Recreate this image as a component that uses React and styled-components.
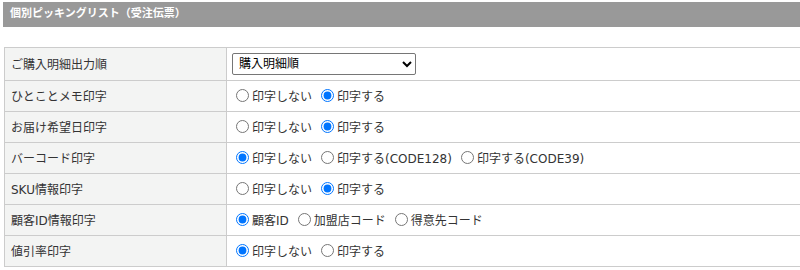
import React from 'react';
import styled, { createGlobalStyle } from 'styled-components';

const GlobalStyle = createGlobalStyle`
  html, body {
    margin: 0;
    padding: 0;
    background: #fff;
    overflow: hidden;
  }
  body {
    font-family: "DejaVu Sans", "Noto Sans CJK JP", sans-serif;
    font-size: 12px;
    color: #333;
  }
`;

const rows = [
  { label: 'ひとことメモ印字', name: 'memo', options: ['印字しない', '印字する'], checked: 1 },
  { label: 'お届け希望日印字', name: 'delivery', options: ['印字しない', '印字する'], checked: 1 },
  { label: 'バーコード印字', name: 'barcode', options: ['印字しない', '印字する(CODE128)', '印字する(CODE39)'], checked: 0 },
  { label: 'SKU情報印字', name: 'sku', options: ['印字しない', '印字する'], checked: 1 },
  { label: '顧客ID情報印字', name: 'customer', options: ['顧客ID', '加盟店コード', '得意先コード'], checked: 0 },
  { label: '値引率印字', name: 'discount', options: ['印字しない', '印字する'], checked: 0 },
];

const App = () => {
  return (
    <Page>
      <GlobalStyle />
      <SectionTitle>個別ピッキングリスト（受注伝票）</SectionTitle>
      <SettingTable>
        <colgroup>
          <LabelCol />
          <col />
        </colgroup>
        <tbody>
          <Row $first>
            <LabelCell>ご購入明細出力順</LabelCell>
            <ValueCell>
              <Select defaultValue="detail">
                <option value="detail">購入明細順</option>
              </Select>
            </ValueCell>
          </Row>
          {rows.map((row) => (
            <Row key={row.name}>
              <LabelCell>{row.label}</LabelCell>
              <ValueCell>
                {row.options.map((opt, i) => (
                  <RadioLabel key={opt}>
                    <Radio type="radio" name={row.name} defaultChecked={i === row.checked} />
                    {opt}
                  </RadioLabel>
                ))}
              </ValueCell>
            </Row>
          ))}
        </tbody>
      </SettingTable>
    </Page>
  );
};

export default App;

const Page = styled.div`
  padding: 2px 0 0 3px;
`;

const SectionTitle = styled.div`
  height: 25px;
  line-height: 24px;
  background: #999999;
  color: #fff;
  font-weight: bold;
  font-size: 11px;
  padding-left: 7px;
  margin-bottom: 20px;
`;

const SettingTable = styled.table`
  border-collapse: collapse;
  table-layout: fixed;
  margin-left: 1px;
  width: 830px;
`;

const LabelCol = styled.col`
  width: 222px;
`;

const Row = styled.tr`
  height: ${(p) => (p.$first ? '33px' : '31px')};
`;

const LabelCell = styled.td`
  background: #f3f4f3;
  border: 1px solid #cccccc;
  padding: 0 0 2px 6px;
  color: #333;
  vertical-align: middle;
`;

const ValueCell = styled.td`
  border: 1px solid #cccccc;
  padding: 0 4px 0 4px;
  vertical-align: middle;
  white-space: nowrap;
`;

const Select = styled.select`
  width: 184px;
  height: 22px;
  margin: 0 0 0 1px;
  font-family: "DejaVu Sans", "Noto Sans CJK JP", sans-serif;
  font-size: 12px;
  color: #000;
  border: 1px solid #767676;
  border-radius: 2px;
  background: #fff;
  padding: 0 2px;
`;

const RadioLabel = styled.label`
  display: inline-flex;
  align-items: center;
  margin-right: 4px;
  color: #333;
`;

const Radio = styled.input`
  width: 13px;
  height: 13px;
  margin: 1px 3px 0 5px;
`;
